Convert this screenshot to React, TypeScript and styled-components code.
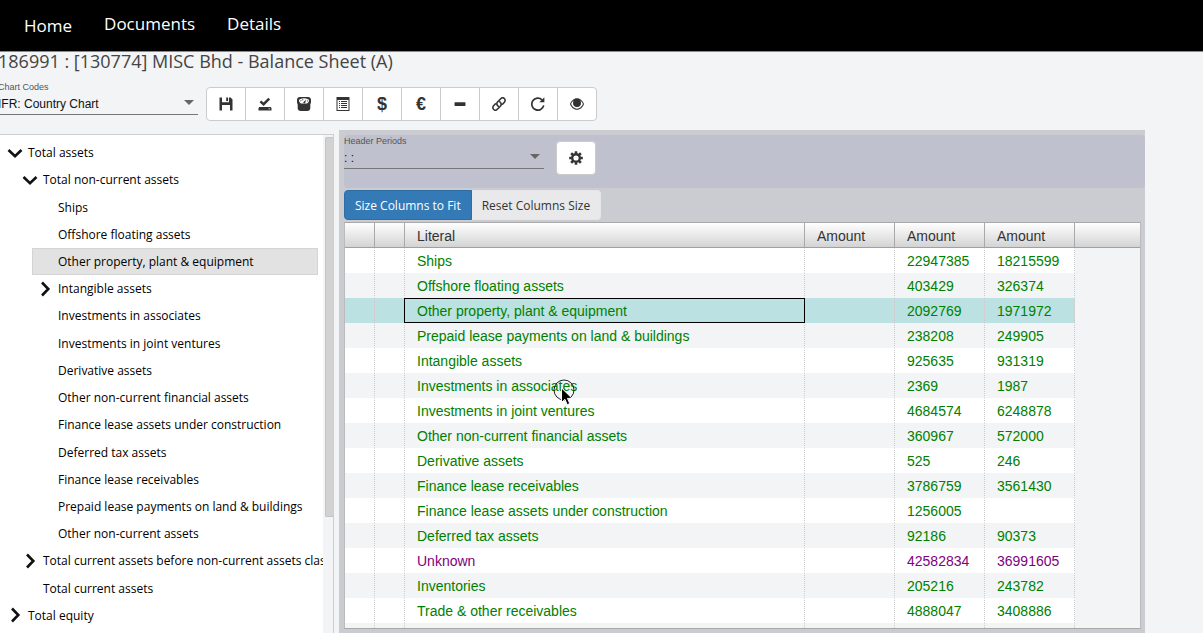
import React from "react";
import styled, { createGlobalStyle, css } from "styled-components";

const pageBg = "#f3f4f6";
const openSans = `"Open Sans", "Noto Sans", sans-serif`;
const arial = `"Liberation Sans", Arial, sans-serif`;

const GlobalStyle = createGlobalStyle`
  *, *::before, *::after { box-sizing: border-box; }
  body {
    margin: 0;
    background: ${pageBg};
    font-family: ${openSans};
    color: #333;
    overflow: hidden;
  }
  button, select { font: inherit; color: inherit; }
`;

const Page = styled.div`
  display: flex;
  flex-direction: column;
  height: 100vh;
`;

const TopBar = styled.header`
  flex: none;
  height: 52px;
  background: #000;
  border-bottom: 1px solid #8a8a8a;
`;

const Nav = styled.nav`
  display: flex;
  align-items: flex-start;
  gap: 32px;
  padding: 10px 24px 0;
`;

const NavLink = styled.a<{ $brand?: boolean }>`
  padding-top: ${(p) => (p.$brand ? 2 : 0)}px;
  color: #fff;
  font-size: 17px;
  line-height: 28px;
  text-decoration: none;
`;

const Title = styled.h1`
  flex: none;
  margin: 0 0 0 -2px;
  font-size: 18px;
  font-weight: 400;
  line-height: 18px;
  color: #444;
  white-space: nowrap;
`;

const Toolbar = styled.div`
  flex: none;
  display: flex;
  gap: 8px;
  height: 60px;
  padding-top: 11px;
  margin-left: -2px;
`;

const Field = styled.div`
  position: relative;
  display: flex;
  flex-direction: column;
  width: 200px;
  font-family: ${arial};
`;

const FieldLabel = styled.label`
  font-size: 9px;
  line-height: 12px;
  color: #555;
`;

const Select = styled.select`
  appearance: none;
  width: 100%;
  height: 22px;
  padding: 0 20px 0 0;
  border: 0;
  border-bottom: 1px solid #777;
  border-radius: 0;
  background: transparent;
  font-size: 12px;
  color: #111;
  outline: none;
`;

const Caret = styled.span`
  position: absolute;
  right: 4px;
  top: 19px;
  border: 5px solid transparent;
  border-top-color: #666;
  border-bottom: 0;
  pointer-events: none;
`;

const ButtonGroup = styled.div`
  display: flex;
  height: 34px;
  margin-top: 6px;
`;

const IconButton = styled.button`
  display: flex;
  align-items: center;
  justify-content: center;
  width: 40px;
  height: 34px;
  margin: 0 0 0 -1px;
  padding: 0;
  border: 1px solid #ccc;
  background: #fff;
  color: #333;
  font-family: ${arial};
  font-size: 18px;
  font-weight: 700;
  &:first-child {
    margin-left: 0;
    border-top-left-radius: 4px;
    border-bottom-left-radius: 4px;
  }
  &:last-child {
    border-top-right-radius: 4px;
    border-bottom-right-radius: 4px;
  }
`;

const Workspace = styled.main`
  flex: 1;
  display: flex;
  align-items: stretch;
  gap: 5px;
  min-height: 0;
  padding-right: 58px;
`;

const TreePanel = styled.aside`
  flex: none;
  display: flex;
  justify-content: space-between;
  width: 334px;
  margin-top: 4px;
  border: 1px solid #ccced2;
  border-left: 0;
  border-bottom: 0;
  background: #fff;
  overflow: hidden;
`;

const TreeList = styled.ul`
  display: grid;
  grid-template-columns: minmax(0, 1fr);
  grid-auto-rows: 1fr;
  width: 323px;
  height: 490px;
  margin: 4px 0 0;
  padding: 0;
  list-style: none;
  overflow: hidden;
`;

const TreeItem = styled.li<{ $level: number }>`
  display: flex;
  margin: 0 5px 0 ${(p) => 2 + p.$level * 15}px;
`;

const TreeButton = styled.button<{ $selected?: boolean }>`
  display: flex;
  align-items: center;
  width: 100%;
  padding: 0;
  border: 1px solid transparent;
  background: transparent;
  color: #000;
  font-size: 12px;
  white-space: nowrap;
  ${(p) =>
    p.$selected &&
    css`
      background: #e2e2e2;
      border-color: #d4d4d4;
    `}
`;

const Twisty = styled.span`
  flex: none;
  display: flex;
  width: 25px;
  padding-left: 4px;
`;

const ScrollTrack = styled.div`
  flex: none;
  width: 10px;
  padding: 2px 0 0 2px;
  background: ${pageBg};
`;

const ScrollThumb = styled.div`
  height: 380px;
  border: 1px solid #c4c4c6;
  border-right: 0;
  border-radius: 2px 0 0 2px;
  background: #d2d2d2;
`;

const DataPanel = styled.section`
  flex: 1;
  display: flex;
  flex-direction: column;
  min-width: 0;
  padding: 5px 0 4px 5px;
  background: #cbccd1;
`;

const PeriodBar = styled.div`
  flex: none;
  display: flex;
  gap: 13px;
  height: 53px;
  border-radius: 4px;
  background: #bfc1ce;
`;

const GearButton = styled(IconButton)`
  margin-top: 6px;
  border-radius: 4px;
  &:first-child,
  &:last-child {
    border-radius: 4px;
  }
`;

const SizeButtons = styled.div`
  flex: none;
  display: flex;
  margin: 2px 0;
`;

const SizeButton = styled.button<{ $primary?: boolean }>`
  height: 30px;
  padding: 0 10px;
  border: 1px solid ${(p) => (p.$primary ? "#2e6da4" : "#e6e6e8")};
  border-left-width: ${(p) => (p.$primary ? 1 : 0)}px;
  border-radius: ${(p) => (p.$primary ? "4px 0 0 4px" : "0 4px 4px 0")};
  background: ${(p) => (p.$primary ? "#337ab7" : "#e9e9eb")};
  color: ${(p) => (p.$primary ? "#fff" : "#333")};
  font-size: 12px;
  white-space: nowrap;
`;

const GridFrame = styled.div`
  flex: 1;
  min-height: 0;
  margin-right: 4px;
  border: 1px solid #a9a9a9;
  border-left-color: #bbb;
  border-right-color: #bbb;
  background: ${pageBg};
  overflow: hidden;
`;

const Grid = styled.table`
  width: 100%;
  table-layout: fixed;
  border-collapse: separate;
  border-spacing: 0;
  font-family: ${arial};
  font-size: 14px;
`;

const Col = styled.col<{ $width?: number }>`
  width: ${(p) => (p.$width ? `${p.$width}px` : "auto")};
`;

const HeadCell = styled.th`
  height: 25px;
  padding: 2px 12px 0;
  border-right: 1px solid #a9a9a9;
  border-bottom: 1px solid #a0a0a0;
  background: linear-gradient(#fff, #d3d3d3);
  color: #333;
  font-weight: 400;
  text-align: left;
  &:last-child {
    border-right: 0;
  }
`;

const Row = styled.tr<{ $selected?: boolean; $unknown?: boolean }>`
  background: #fff;
  color: ${(p) => (p.$unknown ? "#800080" : "#008000")};
  &:nth-child(even) {
    background: ${pageBg};
  }
  &&& {
    ${(p) => p.$selected && "background: #bce1e3;"}
  }
`;

const Cell = styled.td<{ $focused?: boolean }>`
  height: 25px;
  padding: 0 12px;
  border: 1px solid transparent;
  border-width: 1px 1px 1px 0;
  border-right: 1px dotted #c8c8c8;
  white-space: nowrap;
  ${(p) =>
    p.$focused &&
    css`
      border-color: #000;
      border-right-style: solid;
      box-shadow: -1px 0 #000;
    `}
  &:last-child {
    border: 0;
    background: ${pageBg};
  }
`;

const Pointer = styled.svg`
  position: fixed;
  left: 552px;
  top: 378px;
  pointer-events: none;
`;

type Node = { label: string; level: number; state?: "open" | "closed"; selected?: boolean };

const tree: Node[] = [
  { label: "Total assets", level: 0, state: "open" },
  { label: "Total non-current assets", level: 1, state: "open" },
  { label: "Ships", level: 2 },
  { label: "Offshore floating assets", level: 2 },
  { label: "Other property, plant & equipment", level: 2, selected: true },
  { label: "Intangible assets", level: 2, state: "closed" },
  { label: "Investments in associates", level: 2 },
  { label: "Investments in joint ventures", level: 2 },
  { label: "Derivative assets", level: 2 },
  { label: "Other non-current financial assets", level: 2 },
  { label: "Finance lease assets under construction", level: 2 },
  { label: "Deferred tax assets", level: 2 },
  { label: "Finance lease receivables", level: 2 },
  { label: "Prepaid lease payments on land & buildings", level: 2 },
  { label: "Other non-current assets", level: 2 },
  { label: "Total current assets before non-current assets classified", level: 1, state: "closed" },
  { label: "Total current assets", level: 1 },
  { label: "Total equity", level: 0, state: "closed" },
];

const rows: [string, string, string][] = [
  ["Ships", "22947385", "18215599"],
  ["Offshore floating assets", "403429", "326374"],
  ["Other property, plant & equipment", "2092769", "1971972"],
  ["Prepaid lease payments on land & buildings", "238208", "249905"],
  ["Intangible assets", "925635", "931319"],
  ["Investments in associates", "2369", "1987"],
  ["Investments in joint ventures", "4684574", "6248878"],
  ["Other non-current financial assets", "360967", "572000"],
  ["Derivative assets", "525", "246"],
  ["Finance lease receivables", "3786759", "3561430"],
  ["Finance lease assets under construction", "1256005", ""],
  ["Deferred tax assets", "92186", "90373"],
  ["Unknown", "42582834", "36991605"],
  ["Inventories", "205216", "243782"],
  ["Trade & other receivables", "4888047", "3408886"],
  ["", "", ""],
];

const Icon = ({ children }: { children: React.ReactNode }) => (
  <svg width="14" height="14" viewBox="0 0 14 14" fill="currentColor" aria-hidden="true">
    {children}
  </svg>
);

const tools: { name: string; icon: React.ReactNode }[] = [
  {
    name: "Save",
    icon: (
      <Icon>
        <path d="M.5.5H3v4.800h7V.5h1.600L13.500 2.400v11.100H11V8H3v5.500H.5z" />
        <path d="M7.200.5h1.900v3.600H7.200z" />
      </Icon>
    ),
  },
  {
    name: "Validate",
    icon: (
      <Icon>
        <path d="M1.600 5.200 3.300 3.500l2.200 2.100L10.300.8l1.800 1.700L5.600 9z" />
        <path fillRule="evenodd" d="M1.300 10h11.400l.8 1v2.500H.5V11zM10.500 11.400v.8h1.600v-.8z" />
      </Icon>
    ),
  },
  {
    name: "Balance",
    icon: (
      <Icon>
        <path
          fillRule="evenodd"
          d="M3 0h8c1.800 0 3 1.200 3 3v2c0 1-.7 1.800-.7 3v3c0 1.800-1.200 3-3 3H3.700c-1.800 0-3-1.200-3-3V8C.7 6.800 0 6 0 5V3c0-1.800 1.200-3 3-3zM7 1.300C4.200 1.300 2 2.200 2 3.600c0 1.200.9 2.600 2 2.900h6c1.100-.3 2-1.700 2-2.900 0-1.400-2.200-2.300-5-2.300z"
        />
        <path d="M6 5.800 8.900 2.400 8.200 6.200zM3.400 3.300h1v1h-1zM5.300 2.200h1v1h-1zM9.900 3.500h1v1h-1z" />
      </Icon>
    ),
  },
  {
    name: "List",
    icon: (
      <Icon>
        <path fillRule="evenodd" d="M.5 0h13v14H.5zM1.500 3v10h11V3z" />
        <path d="M3 4h1v1H3zM5 4h6v1H5zM3 6h1v1H3zM5 6h6v1H5zM3 8h1v1H3zM5 8h6v1H5zM3 10h1v1H3zM5 10h6v1H5z" />
      </Icon>
    ),
  },
  { name: "Dollar", icon: "$" },
  { name: "Euro", icon: "€" },
  {
    name: "Collapse",
    icon: (
      <Icon>
        <rect x="1.500" y="5.300" width="11" height="3.600" rx=".6" />
      </Icon>
    ),
  },
  {
    name: "Link",
    icon: (
      <Icon>
        <g fill="none" stroke="currentColor" strokeWidth="1.600" strokeLinecap="round">
          <path d="M6.200 9.200C4.600 8 4.400 6.200 5.500 5l3.200-3.300c1.100-1.100 2.600-1.100 3.600-.2 1.100 1 1.100 2.600.1 3.700L10.500 7.200" />
          <path d="M7.800 4.800C9.400 6 9.600 7.800 8.500 9l-3.200 3.300c-1.100 1.100-2.600 1.100-3.600.2-1.100-1-1.100-2.600-.1-3.700L3.500 6.800" />
        </g>
      </Icon>
    ),
  },
  {
    name: "Reload",
    icon: (
      <Icon>
        <path d="M12.700 8.300A6 6 0 1 1 11 2.800" fill="none" stroke="currentColor" strokeWidth="1.700" />
        <path d="M13.400.2v5H8.300z" />
      </Icon>
    ),
  },
  {
    name: "View",
    icon: (
      <Icon>
        <path
          fillRule="evenodd"
          d="M7 1.200c3.200 0 5.800 2.500 7 5.800-1.200 3.300-3.800 5.800-7 5.800S1.200 10.300 0 7c1.200-3.300 3.800-5.800 7-5.800zM3.900 3.600C2.600 4.300 1.700 5.500 1.100 7c1 2.700 3.200 4.700 5.900 4.700s4.900-2 5.900-4.700c-.6-1.500-1.500-2.700-2.800-3.400.5.600.8 1.500.8 2.400a3.900 3.900 0 0 1-7.800 0c0-.9.300-1.800.8-2.400z"
        />
        <path fillRule="evenodd" d="M7 2.400a3.600 3.600 0 1 1 0 7.200 3.600 3.600 0 0 1 0-7.200zM6.700 3.300C5.400 3.500 4.400 4.500 4.300 5.700l1.300.2c.1-.9.700-1.400 1.500-1.500z" />
      </Icon>
    ),
  },
];

const Gear = () => (
  <Icon>
    <circle cx="7" cy="7" r="3.800" fill="none" stroke="currentColor" strokeWidth="2.400" />
    {[0, 45, 90, 135, 180, 225, 270, 315].map((a) => (
      <rect key={a} x="5.700" y=".2" width="2.600" height="2.400" rx=".4" transform={`rotate(${a} 7 7)`} />
    ))}
  </Icon>
);

const Chevron = ({ open }: { open: boolean }) => (
  <svg width="16" height="16" viewBox="0 0 16 16" fill="none" stroke="#111" strokeWidth="2.600" aria-hidden="true">
    <path d={open ? "M1.500 5 8 11.300 14.500 5" : "M5 1.500 11.300 8 5 14.500"} />
  </svg>
);

export default function App() {
  return (
    <Page>
      <GlobalStyle />
      <TopBar>
        <Nav>
          <NavLink href="#home" $brand>Home</NavLink>
          <NavLink href="#documents">Documents</NavLink>
          <NavLink href="#details">Details</NavLink>
        </Nav>
      </TopBar>
      <Title>186991 : [130774] MISC Bhd - Balance Sheet (A)</Title>
      <Toolbar>
        <Field>
          <FieldLabel htmlFor="chart-codes">Chart Codes</FieldLabel>
          <Select id="chart-codes">
            <option>IFR: Country Chart</option>
          </Select>
          <Caret />
        </Field>
        <ButtonGroup>
          {tools.map((t) => (
            <IconButton key={t.name} type="button" aria-label={t.name}>
              {t.icon}
            </IconButton>
          ))}
        </ButtonGroup>
      </Toolbar>
      <Workspace>
        <TreePanel>
          <TreeList>
            {tree.map((n) => (
              <TreeItem key={n.label} $level={n.level}>
                <TreeButton type="button" $selected={n.selected}>
                  <Twisty>{n.state && <Chevron open={n.state === "open"} />}</Twisty>
                  {n.label}
                </TreeButton>
              </TreeItem>
            ))}
          </TreeList>
          <ScrollTrack>
            <ScrollThumb />
          </ScrollTrack>
        </TreePanel>
        <DataPanel>
          <PeriodBar>
            <Field>
              <FieldLabel htmlFor="header-periods">Header Periods</FieldLabel>
              <Select id="header-periods">
                <option>: :</option>
              </Select>
              <Caret />
            </Field>
            <GearButton type="button" aria-label="Settings">
              <Gear />
            </GearButton>
          </PeriodBar>
          <SizeButtons>
            <SizeButton type="button" $primary>Size Columns to Fit</SizeButton>
            <SizeButton type="button">Reset Columns Size</SizeButton>
          </SizeButtons>
          <GridFrame>
            <Grid>
              <colgroup>
                <Col $width={30} />
                <Col $width={30} />
                <Col $width={400} />
                <Col $width={90} />
                <Col $width={90} />
                <Col $width={90} />
                <Col />
              </colgroup>
              <thead>
                <tr>
                  {["", "", "Literal", "Amount", "Amount", "Amount", ""].map((h, i) => (
                    <HeadCell key={i}>{h}</HeadCell>
                  ))}
                </tr>
              </thead>
              <tbody>
                {rows.map(([literal, a, b], i) => (
                  <Row key={i} $selected={i === 2} $unknown={literal === "Unknown"}>
                    <Cell />
                    <Cell />
                    <Cell $focused={i === 2}>{literal}</Cell>
                    <Cell />
                    <Cell>{a}</Cell>
                    <Cell>{b}</Cell>
                    <Cell />
                  </Row>
                ))}
              </tbody>
            </Grid>
          </GridFrame>
        </DataPanel>
      </Workspace>
      <Pointer width="24" height="30" viewBox="0 0 24 30" aria-hidden="true">
        <circle cx="12" cy="12" r="10" fill="none" stroke="#222" />
        <path d="M9.500 10v14.500l3.400-3.200 2.300 5.400 2.600-1.100-2.300-5.200h4.700z" fill="#000" stroke="#fff" />
      </Pointer>
    </Page>
  );
}
